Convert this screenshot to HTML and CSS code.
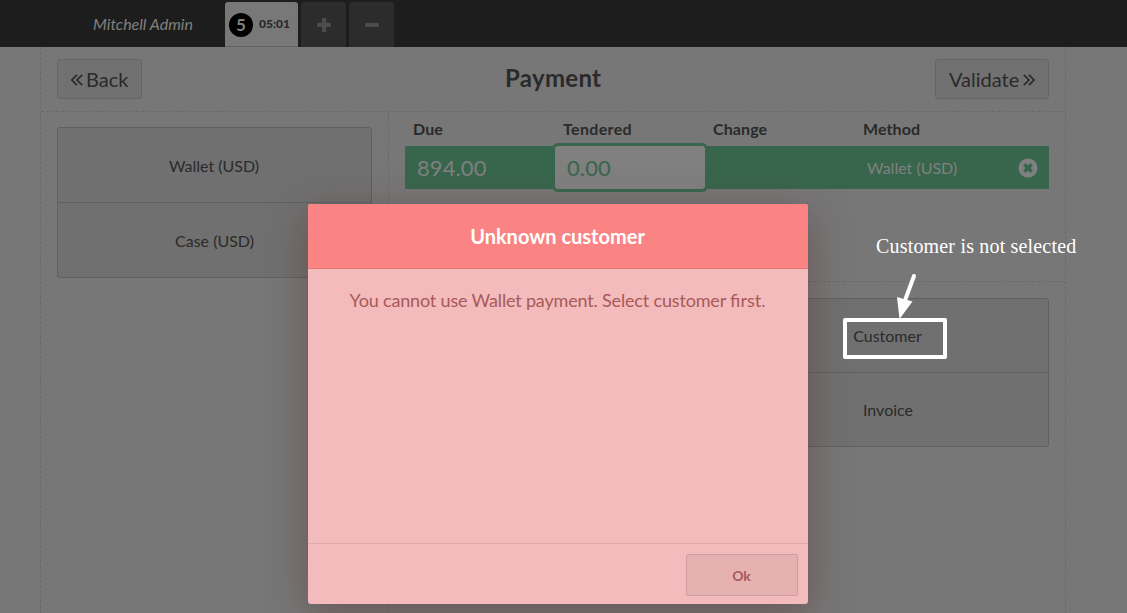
FILE: index.html
```html
<!DOCTYPE html>
<html lang="en">
<head>
<meta charset="utf-8">
<title>Payment</title>
<link rel="stylesheet" href="styles.css">
</head>
<body>
<header class="topbar">
  <span class="username">Mitchell Admin</span>
  <nav class="orders">
    <div class="order selected"><span class="order-number">5</span><span class="order-time">05:01</span></div>
    <div class="order square"><svg width="14" height="14" viewBox="0 0 14 14"><path d="M5.8 0h2.7q.8 0 .8.8v4h3.9q.8 0 .8.8v2.6q0 .8-.8.8H9.3v4.2q0 .8-.8.8H5.8q-.8 0-.8-.8V9H.8Q0 9 0 8.200V5.600q0-.8.8-.8H5v-4q0-.8.8-.8z"/></svg></div>
    <div class="order square"><svg width="14" height="14" viewBox="0 0 14 14"><rect y="4.900" width="14" height="4.200" rx=".8"/></svg></div>
  </nav>
</header>
<main class="screen">
  <div class="screen-head">
    <div class="button back"><svg width="12" height="12" viewBox="0 0 12 12"><path d="M6 .8.8 6 6 11.200M11.200.8 6 6l5.200 5.200"/></svg><span>Back</span></div>
    <h1 class="title">Payment</h1>
    <div class="button validate"><span>Validate</span><svg width="12" height="12" viewBox="0 0 12 12"><path d="M.8.8 6 6 .8 11.200M6 .8 11.200 6 6 11.200"/></svg></div>
  </div>
  <div class="columns">
    <section class="methods">
      <div class="stack">
        <div class="stack-item">Wallet (USD)</div>
        <div class="stack-item">Case (USD)</div>
      </div>
    </section>
    <section class="details">
      <div class="lines">
        <div class="line line-head"><b>Due</b><b>Tendered</b><b>Change</b><b>Method</b></div>
        <div class="line line-row">
          <span class="due">894.00</span>
          <span class="tendered">0.00</span>
          <span></span>
          <span class="method">Wallet (USD)</span>
          <svg class="delete" width="20" height="20" viewBox="0 0 20 20"><circle cx="10" cy="10" r="9.500"/><path d="M6.300 6.300l7.400 7.400M13.700 6.300l-7.400 7.400"/></svg>
        </div>
      </div>
      <div class="actions">
        <div class="stack action-stack">
          <div class="stack-item">Customer</div>
          <div class="stack-item">Invoice</div>
        </div>
      </div>
    </section>
  </div>
</main>
<div class="popup">
  <div class="popup-title">Unknown customer</div>
  <div class="popup-body">You cannot use Wallet payment. Select customer <span class="ligature">first.</span></div>
  <div class="popup-footer"><div class="popup-button">Ok</div></div>
</div>
<div class="note">Customer is not selected</div>
<svg class="note-arrow" width="24" height="50" viewBox="0 0 24 50"><path class="shaft" d="M18 6 9.500 29"/><path class="tip" d="M1 27 16.500 31.500 3.500 49z"/></svg>
<div class="note-frame"></div>
</body>
</html>
```
FILE: styles.css
```css
* { box-sizing: border-box; }
body {
  margin: 0;
  height: 613px;
  overflow: hidden;
  position: relative;
  display: flex;
  flex-direction: column;
  background: #777;
  color: #2a2a2a;
  font: 16px/20px Lato, sans-serif;
}
svg { display: block; }
.topbar {
  height: 47px;
  flex: none;
  display: flex;
  background: #1d1d1d;
}
.username {
  width: 225px;
  padding: 14px 0 0 93px;
  color: #808080;
  font-style: italic;
}
.orders { display: flex; gap: 3px; padding-top: 2px; }
.order {
  display: flex;
  align-items: center;
  border-radius: 3px 3px 0 0;
}
.order.selected {
  width: 73px;
  padding-left: 4px;
  gap: 6px;
  background: #787878;
  border-bottom: 1px solid #626262;
}
.order-number {
  width: 24px;
  height: 24px;
  margin-top: 2px;
  border-radius: 50%;
  background: #000;
  color: #808080;
  font-size: 17px;
  font-weight: 700;
  line-height: 24px;
  text-align: center;
}
.order-time { font-size: 12px; font-weight: 900; }
.order.square {
  width: 45px;
  justify-content: center;
  background: #2c2c2c;
  fill: #4b4b4b;
}
.screen {
  width: 1026px;
  flex: 1;
  margin-left: 40px;
  display: flex;
  flex-direction: column;
  border: dashed #6a6a6a;
  border-width: 0 1px;
}
.screen-head {
  height: 65px;
  flex: none;
  display: flex;
  justify-content: space-between;
  padding: 12px 16px;
  border-bottom: 1px dashed #6a6a6a;
}
.button {
  height: 40px;
  display: flex;
  align-items: center;
  gap: 3px;
  padding: 0 13px;
  border: 1px solid #656565;
  border-radius: 3px;
  background: #717171;
  font-size: 20px;
}
.button.validate { width: 114px; gap: 4px; }
.button svg { fill: none; stroke: #2a2a2a; stroke-width: 1.7; margin-top: 2px; }
.title { margin: 0 0 0 29px; font-size: 24px; line-height: 38px; letter-spacing: .3px; }
.columns { flex: 1; display: flex; }
.methods {
  width: 348px;
  padding: 15px 16px;
  border-right: 1px dashed #6a6a6a;
}
.stack {
  display: flex;
  flex-direction: column;
  border: 1px solid #606060;
  border-radius: 3px;
  background: #707070;
}
.stack-item {
  height: 74px;
  display: flex;
  align-items: center;
  justify-content: center;
}
.methods .stack-item { height: 74px; padding: 2px 1px 0 0; }
.stack-item + .stack-item { border-top: 1px solid #606060; }
.methods .stack-item + .stack-item { height: 75px; padding-right: 0; }
.details { flex: 1; display: flex; flex-direction: column; }
.lines {
  height: 170px;
  padding: 0 16px;
  border-bottom: 1px dashed #6a6a6a;
}
.line {
  display: grid;
  grid-template-columns: 150px 150px 150px 1fr auto;
  align-items: center;
}
.line-head { height: 34px; }
.line-head b { padding-left: 8px; letter-spacing: .1px; }
.line-head b:nth-child(2) { letter-spacing: .35px; }
.line-row { height: 43px; background: #38664c; color: #808080; }
.due, .tendered { padding-left: 12px; font-size: 22px; line-height: 43px; letter-spacing: .1px; }
.tendered {
  border-radius: 3px;
  background: #808080;
  box-shadow: 0 0 0 3px #38664c;
  color: #38664c;
}
.method { padding-left: 12px; }
.delete { margin-right: 11px; fill: #808080; }
.delete path { stroke: #38664c; stroke-width: 3.500; }
.actions { display: flex; justify-content: flex-end; padding: 16px; }
.action-stack { width: 322px; }
.action-stack .stack-item { height: 73px; padding-right: 1px; }
.action-stack .stack-item + .stack-item { height: 74px; padding-right: 0; }
.popup {
  position: absolute;
  left: 308px;
  top: 204px;
  width: 500px;
  height: 400px;
  display: flex;
  flex-direction: column;
  overflow: hidden;
  border-radius: 3px;
  background: #f3bbbb;
  box-shadow: 0 10px 40px rgba(93, 52, 52, .5);
  color: #a85959;
  text-align: center;
}
.popup-title {
  height: 65px;
  padding-right: 1px;
  border-bottom: 1px solid #df7777;
  background: #fa8383;
  color: #fff;
  font-size: 20px;
  font-weight: 700;
  line-height: 64px;
}
.popup-body {
  flex: 1;
  padding: 20px 1px 0 0;
  font-size: 18px;
  line-height: 22px;
  letter-spacing: -.17px;
}
.ligature { letter-spacing: normal; }
.popup-footer {
  height: 61px;
  display: flex;
  justify-content: flex-end;
  padding: 10px;
  border-top: 1px solid #dfacac;
}
.popup-button {
  width: 112px;
  height: 42px;
  padding-right: 1px;
  border: 1px solid #cf9f9f;
  border-radius: 2px;
  background: #e5b1b1;
  font-size: 14px;
  font-weight: 700;
  line-height: 42px;
}
.note {
  position: absolute;
  left: 876px;
  top: 234px;
  color: #fff;
  font: 20px/24px "Liberation Serif", serif;
  letter-spacing: .18px;
  white-space: nowrap;
}
.note-arrow { position: absolute; left: 896px; top: 270px; }
.shaft { fill: none; stroke: #fff; stroke-width: 4; stroke-linecap: round; }
.tip { fill: #fff; }
.note-frame {
  position: absolute;
  left: 843px;
  top: 318px;
  width: 104px;
  height: 41px;
  border: 4px solid #fff;
  border-radius: 2px;
}
```
